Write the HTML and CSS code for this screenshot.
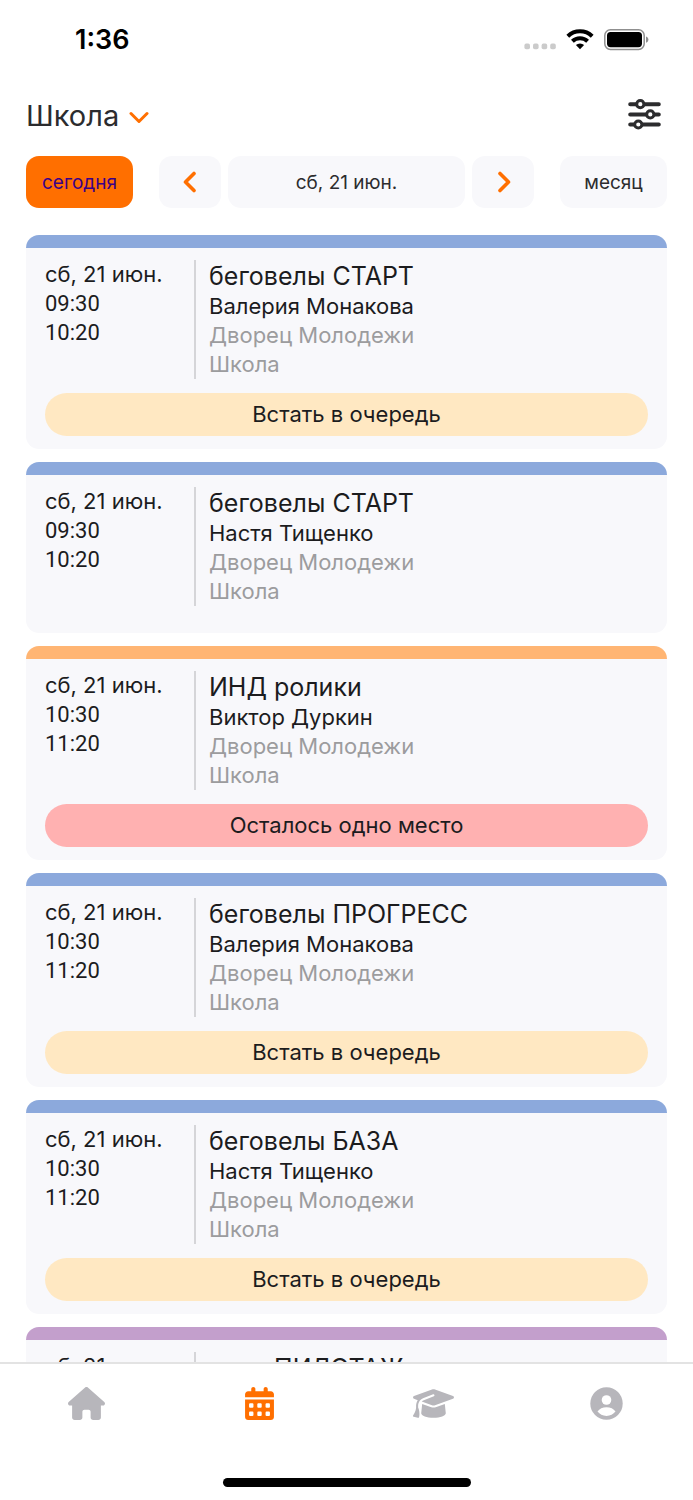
FILE: index.html
```html
<!DOCTYPE html>
<html lang="ru">
<head>
    <meta charset="UTF-8">
    <meta name="viewport" content="width=device-width, initial-scale=1">
    <title>Расписание</title>
    <link rel="stylesheet" href="styles.css">
</head>
<body>
    <div class="status-bar">
        <span class="status-time">1:36</span>
        <div class="status-icons">
            <svg width="32" height="22" viewBox="0 0 32 22" fill="#cbcbcb">
                <rect x="0.4" y="14.6" width="5.6" height="5.6" rx="1.8"/>
                <rect x="9" y="14.6" width="5.6" height="5.6" rx="1.8"/>
                <rect x="17.6" y="14.6" width="5.6" height="5.6" rx="1.8"/>
                <rect x="26.2" y="14.6" width="5.6" height="5.6" rx="1.8"/>
            </svg>
            <svg width="28" height="22" viewBox="0 0 28 22" fill="none" stroke="#000" stroke-width="4">
                <path d="M1.8 7.2a17.6 17.6 0 0 1 24.4 0"/>
                <path d="M6.4 12.2a11 11 0 0 1 15.2 0"/>
                <path d="M14 20.2l-4.1-4.1a5.8 5.8 0 0 1 8.2 0z" fill="#000" stroke="none"/>
            </svg>
            <svg width="45" height="22" viewBox="0 0 45 22">
                <rect x="0.8" y="0.8" width="39.4" height="19.6" rx="5.6" fill="none" stroke="#8f8f8f" stroke-width="1.5"/>
                <rect x="3" y="3" width="35" height="15.2" rx="3.6"/>
                <path d="M42 7.4c1.6.6 2.4 1.8 2.4 3.2s-.8 2.6-2.4 3.2z" fill="#8f8f8f"/>
            </svg>
        </div>
    </div>

    <header class="header">
        <button class="school-button">
            Школа
            <svg class="chevron" width="20" height="13" viewBox="0 0 20 13" fill="none" stroke="#ff6f00" stroke-width="3" stroke-linecap="round" stroke-linejoin="round">
                <path d="M2 2.5l8 8 8-8"/>
            </svg>
        </button>
        <button class="filter-button" aria-label="Фильтры">
            <svg width="33" height="32" viewBox="0 0 33 32" fill="none" stroke="#2c2c2e" stroke-width="4" stroke-linecap="round">
                <path d="M2.2 5.2h28.6M2.2 15.4h28.6M2.2 25.5h28.6"/>
                <g fill="#fff" stroke-width="3">
                    <circle cx="12.3" cy="5.2" r="3.6"/>
                    <circle cx="22.3" cy="15.4" r="3.6"/>
                    <circle cx="10.3" cy="25.5" r="3.6"/>
                </g>
            </svg>
        </button>
    </header>

    <div class="toolbar">
        <button class="tool-button today">сегодня</button>
        <div class="date-nav">
            <button class="nav-button" aria-label="Назад">
                <svg width="15" height="22" viewBox="0 0 15 22" fill="none" stroke="#ff6f00" stroke-width="3.6" stroke-linecap="round" stroke-linejoin="round">
                    <path d="M11 2.5L2.5 11l8.5 8.5"/>
                </svg>
            </button>
            <button class="nav-button current-date">сб, 21 июн.</button>
            <button class="nav-button" aria-label="Вперёд">
                <svg width="15" height="22" viewBox="0 0 15 22" fill="none" stroke="#ff6f00" stroke-width="3.6" stroke-linecap="round" stroke-linejoin="round">
                    <path d="M4 2.5l8.5 8.5L4 19.5"/>
                </svg>
            </button>
        </div>
        <button class="tool-button">месяц</button>
    </div>

    <main class="lesson-list">
        <article class="lesson blue">
            <div class="lesson-info">
                <div class="lesson-time">
                    <p>сб, 21 июн.</p>
                    <p class="hour">09:30</p>
                    <p class="hour">10:20</p>
                </div>
                <div class="lesson-details">
                    <h2>беговелы СТАРТ</h2>
                    <p>Валерия Монакова</p>
                    <p class="place">Дворец Молодежи</p>
                    <p class="place">Школа</p>
                </div>
            </div>
            <button class="lesson-action">Встать в очередь</button>
        </article>

        <article class="lesson blue">
            <div class="lesson-info">
                <div class="lesson-time">
                    <p>сб, 21 июн.</p>
                    <p class="hour">09:30</p>
                    <p class="hour">10:20</p>
                </div>
                <div class="lesson-details">
                    <h2>беговелы СТАРТ</h2>
                    <p>Настя Тищенко</p>
                    <p class="place">Дворец Молодежи</p>
                    <p class="place">Школа</p>
                </div>
            </div>
        </article>

        <article class="lesson orange">
            <div class="lesson-info">
                <div class="lesson-time">
                    <p>сб, 21 июн.</p>
                    <p class="hour">10:30</p>
                    <p class="hour">11:20</p>
                </div>
                <div class="lesson-details">
                    <h2>ИНД ролики</h2>
                    <p>Виктор Дуркин</p>
                    <p class="place">Дворец Молодежи</p>
                    <p class="place">Школа</p>
                </div>
            </div>
            <button class="lesson-action last-place">Осталось одно место</button>
        </article>

        <article class="lesson blue">
            <div class="lesson-info">
                <div class="lesson-time">
                    <p>сб, 21 июн.</p>
                    <p class="hour">10:30</p>
                    <p class="hour">11:20</p>
                </div>
                <div class="lesson-details">
                    <h2>беговелы ПРОГРЕСС</h2>
                    <p>Валерия Монакова</p>
                    <p class="place">Дворец Молодежи</p>
                    <p class="place">Школа</p>
                </div>
            </div>
            <button class="lesson-action">Встать в очередь</button>
        </article>

        <article class="lesson blue">
            <div class="lesson-info">
                <div class="lesson-time">
                    <p>сб, 21 июн.</p>
                    <p class="hour">10:30</p>
                    <p class="hour">11:20</p>
                </div>
                <div class="lesson-details">
                    <h2>беговелы БАЗА</h2>
                    <p>Настя Тищенко</p>
                    <p class="place">Дворец Молодежи</p>
                    <p class="place">Школа</p>
                </div>
            </div>
            <button class="lesson-action">Встать в очередь</button>
        </article>

        <article class="lesson purple">
            <div class="lesson-info">
                <div class="lesson-time">
                    <p>сб, 21 июн.</p>
                </div>
                <div class="lesson-details">
                    <h2>вело ПИЛОТАЖ</h2>
                </div>
            </div>
        </article>
    </main>

    <nav class="tab-bar">
        <div class="tabs">
            <a class="tab" href="#" aria-label="Главная">
                <svg width="37" height="33" viewBox="0 0 576 512" fill="currentColor">
                    <path d="M575.8 255.5c0 18-15 32.1-32 32.1h-32l.7 160.2c0 2.7-.2 5.4-.5 8.1V472c0 22.1-17.9 40-40 40H456c-1.1 0-2.2 0-3.3-.1c-1.4 .1-2.8 .1-4.2 .1H416 392c-22.1 0-40-17.9-40-40V448 384c0-17.7-14.3-32-32-32H256c-17.7 0-32 14.3-32 32v64 24c0 22.1-17.9 40-40 40H160 128.1c-1.5 0-3-.1-4.5-.2c-1.2 .1-2.4 .2-3.6 .2H104c-22.1 0-40-17.9-40-40V360c0-.9 0-1.9 .1-2.8V287.6H32c-18 0-32-14-32-32.1c0-9 3-17 10-24L266.4 8c7-7 15-8 22-8s15 2 21 7L564.8 231.5c8 7 12 15 11 24z"/>
                </svg>
            </a>
            <a class="tab active" href="#" aria-label="Расписание">
                <svg width="29" height="33" viewBox="0 0 448 512" fill="currentColor">
                    <path d="M96 32V64H48C21.5 64 0 85.5 0 112v48H448V112c0-26.5-21.5-48-48-48H352V32c0-17.7-14.3-32-32-32s-32 14.3-32 32V64H160V32c0-17.7-14.3-32-32-32S96 14.3 96 32z"/>
                    <path d="M448 192H0V464c0 26.5 21.5 48 48 48H400c26.5 0 48-21.5 48-48V192z"/>
                    <g fill="#fff">
                        <rect x="62" y="254" width="68" height="68" rx="16"/>
                        <rect x="190" y="254" width="68" height="68" rx="16"/>
                        <rect x="318" y="254" width="68" height="68" rx="16"/>
                        <rect x="62" y="382" width="68" height="68" rx="16"/>
                        <rect x="190" y="382" width="68" height="68" rx="16"/>
                        <rect x="318" y="382" width="68" height="68" rx="16"/>
                    </g>
                </svg>
            </a>
            <a class="tab" href="#" aria-label="Обучение">
                <svg width="41" height="33" viewBox="0 0 640 512" fill="currentColor">
                    <path d="M320 32c-8.1 0-16.1 1.4-23.7 4.1L15.8 137.4C6.3 140.9 0 149.9 0 160s6.3 19.1 15.8 22.6l57.9 20.9C57.3 229.3 48 259.8 48 291.9v28.1c0 28.4-10.8 57.7-22.3 80.8c-6.5 13-13.9 25.8-22.5 37.6C0 442.7-.9 448.3 .9 453.4s6 8.9 11.2 10.2l64 16c4.2 1.1 8.7 .3 12.4-2s6.3-6.1 7.1-10.4c8.6-42.8 4.3-81.2-2.1-108.7C90.3 344.3 86 329.8 80 316.5V291.9c0-30.2 10.2-58.7 27.9-81.5c12.9-15.5 29.6-28 49.2-35.7l157-61.7c8.2-3.2 17.5 .8 20.7 9s-.8 17.5-9 20.7l-157 61.7c-12.4 4.9-23.3 12.4-32.2 21.6l159.6 57.6c7.6 2.7 15.6 4.1 23.7 4.1s16.1-1.4 23.7-4.1L624.2 182.6c9.5-3.4 15.8-12.5 15.8-22.6s-6.3-19.1-15.8-22.6L343.7 36.1C336.1 33.4 328.1 32 320 32zM128 408c0 35.3 86 72 192 72s192-36.7 192-72L496.7 262.6 354.5 314c-11.1 4-22.8 6-34.5 6s-23.5-2-34.5-6L143.3 262.6 128 408z"/>
                </svg>
            </a>
            <a class="tab" href="#" aria-label="Профиль">
                <svg width="33" height="33" viewBox="0 0 33 33">
                    <circle cx="16.5" cy="16.5" r="16.2" fill="currentColor"/>
                    <circle cx="16.5" cy="13" r="4.8" fill="#fff"/>
                    <path d="M7.5 24.6c2-2.8 5-4.3 9-4.3s7 1.5 9 4.3c-2.2 2.8-5.2 4.4-9 4.4s-6.8-1.6-9-4.4z" fill="#fff"/>
                </svg>
            </a>
        </div>
        <div class="home-indicator"></div>
    </nav>
</body>
</html>
```
FILE: styles.css
```css
* {
    box-sizing: border-box;
}
body {
    margin: 0;
    height: 100vh;
    display: flex;
    flex-direction: column;
    overflow: hidden;
    background-color: #fff;
    color: #1c1c1e;
    font-family: Inter, "Liberation Sans", sans-serif;
    font-size: 22px;
    line-height: 29px;
}
h2, p {
    margin: 0;
}
button {
    border: none;
    padding: 0;
    background: none;
    color: inherit;
    font: inherit;
    cursor: pointer;
}
svg {
    display: block;
}

/* Status bar */
.status-bar {
    display: flex;
    justify-content: space-between;
    align-items: center;
    height: 79px;
    padding: 0 44px 0 75px;
}
.status-time {
    color: #000;
    font-size: 27px;
    font-weight: 600;
}
.status-icons {
    display: flex;
    gap: 10px;
}

/* Header */
.header {
    display: flex;
    justify-content: space-between;
    align-items: center;
    height: 72px;
    padding: 0 32px 0 26px;
    color: #2c2c2e;
}
.school-button {
    display: flex;
    align-items: center;
    gap: 10px;
    font-size: 29px;
}
.chevron {
    margin-top: 4px;
}

/* Toolbar */
.toolbar {
    display: flex;
    gap: 26px;
    padding: 5px 26px 0;
    color: #2c2c2e;
    font-size: 19px;
}
.tool-button,
.nav-button {
    height: 52px;
    border-radius: 13px;
    background-color: #f8f8fb;
}
.tool-button {
    width: 107px;
}
.today {
    background-color: #ff6f00;
    color: #3a0088;
}
.date-nav {
    flex: 1;
    display: flex;
    gap: 7px;
}
.nav-button {
    display: flex;
    align-items: center;
    justify-content: center;
    width: 62px;
}
.current-date {
    flex: 1;
}

/* Lessons */
.lesson-list {
    flex: 1;
    min-height: 0;
    overflow: hidden;
    display: flex;
    flex-direction: column;
    gap: 13px;
    padding: 27px 26px 0;
}
.lesson {
    flex-shrink: 0;
    border-top: 13px solid;
    border-radius: 13px;
    padding: 12px 19px 13px;
    background-color: #f8f8fb;
}
.blue {
    border-color: #8ca9dc;
}
.orange {
    border-color: #ffb573;
}
.purple {
    border-color: #c39fcc;
}
.lesson-info {
    display: flex;
    margin-bottom: 14px;
}
.lesson-time {
    width: 149px;
}
.hour {
    font-family: Roboto, "Liberation Sans", sans-serif;
}
.lesson-details {
    flex: 1;
    border-left: 2px solid #d5d5d8;
    padding-left: 13px;
}
.lesson-details h2 {
    font-size: 25px;
    font-weight: 400;
    line-height: 32px;
}
.place {
    color: #9c9c9e;
}
.lesson-action {
    display: block;
    width: 100%;
    height: 43px;
    border-radius: 22px;
    background-color: #ffe8c2;
}
.last-place {
    background-color: #ffb1b1;
}

/* Tab bar */
.tab-bar {
    height: 138px;
    display: flex;
    flex-direction: column;
    justify-content: space-between;
    align-items: center;
    border-top: 2px solid #e3e3e3;
    padding: 23px 0 13px;
    background-color: #fff;
}
.tabs {
    display: flex;
    width: 100%;
}
.tab {
    flex: 1;
    display: flex;
    justify-content: center;
    color: #b7b6bb;
}
.tab.active {
    color: #ff6f00;
}
.home-indicator {
    width: 248px;
    height: 9px;
    border-radius: 5px;
    background-color: #000;
}
```
